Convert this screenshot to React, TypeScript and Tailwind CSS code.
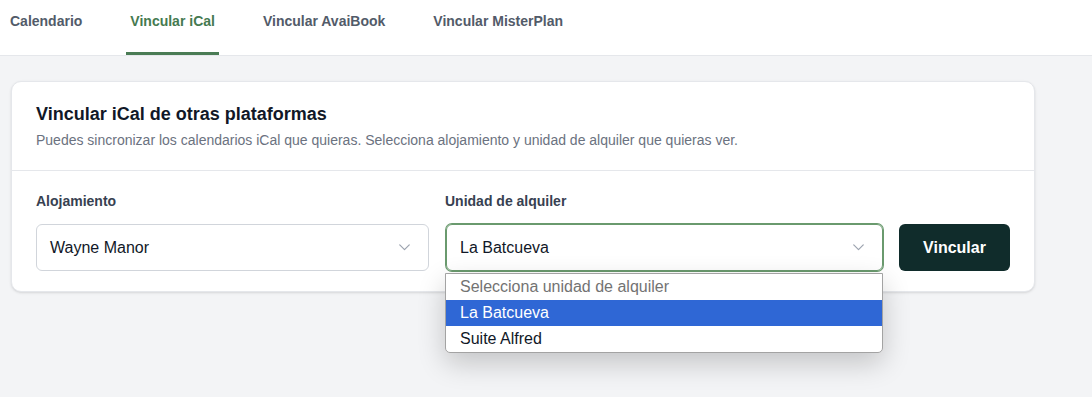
import React from 'react';

const Chevron: React.FC = () => (
  <svg width="11" height="7" viewBox="0 0 11 7" fill="none" className="shrink-0">
    <path d="M0.75 0.9L5.5 5.6L10.25 0.9" stroke="#9ca3af" strokeWidth="1.2" strokeLinecap="round" strokeLinejoin="round" />
  </svg>
);

const App: React.FC = () => {
  const tabs = ['Calendario', 'Vincular iCal', 'Vincular AvaiBook', 'Vincular MisterPlan'];
  const active = 1;
  const options = ['Selecciona unidad de alquiler', 'La Batcueva', 'Suite Alfred'];

  return (
    <div className="min-h-[397px] bg-[#f3f4f6] font-['Liberation_Sans',Arial,sans-serif]">
      {/* Tabs */}
      <div className="bg-white border-b border-[#e5e7eb]">
        <div className="flex gap-10 pl-[6px]">
          {tabs.map((tab, index) => (
            <div
              key={index}
              className={`h-[55px] px-1 pt-[11px] border-b-[3px] text-[14px] leading-5 font-bold
                ${index === active ? 'border-[#4a7c55] text-[#457a50]' : 'border-transparent text-[#525b69]'}`}
            >
              {tab}
            </div>
          ))}
        </div>
      </div>

      {/* Card */}
      <div className="px-[11px] pt-[25px]">
        <div className="w-[1024px] bg-white border border-[#e5e7eb] rounded-[10px] shadow-sm">
          <div className="px-6 pt-5 pb-5 border-b border-[#e5e7eb]">
            <h2 className="text-[18px] leading-6 font-bold text-[#111827]">Vincular iCal de otras plataformas</h2>
            <p className="mt-1 text-[14px] leading-5 text-[#6b7280]">
              Puedes sincronizar los calendarios iCal que quieras. Selecciona alojamiento y unidad de alquiler que quieras ver.
            </p>
          </div>
          <div className="px-6 pt-5 pb-5 flex items-end">
            <div className="w-[393px]">
              <div className="mb-[13px] text-[14px] leading-5 font-bold text-[#374151]">Alojamiento</div>
              <div className="h-[47px] flex items-center justify-between pl-[13px] pr-[18px] border border-[#d1d5db] rounded-md text-[16px] text-[#111827]">
                <span>Wayne Manor</span>
                <Chevron />
              </div>
            </div>
            <div className="w-[437px] ml-[17px]">
              <div className="mb-[13px] -ml-px text-[14px] leading-5 font-bold text-[#374151]">Unidad de alquiler</div>
              <div className="relative">
                <div className="h-[47px] flex items-center justify-between pl-[13px] pr-[18px] border border-[#6a9a6e] ring-1 ring-[#6a9a6e] rounded-md text-[16px] text-[#111827]">
                  <span>La Batcueva</span>
                  <Chevron />
                </div>
                {/* Open listbox */}
                <div className="absolute top-[49px] -left-px right-0 z-10 bg-white border border-[#a3a3a3] rounded-b-[5px] shadow-[0_10px_28px_rgba(0,0,0,0.2)] overflow-hidden">
                  {options.map((opt, index) => (
                    <div
                      key={index}
                      className={`h-[26px] flex items-center pl-[14px] text-[16px]
                        ${index === 1 ? 'bg-[#2f67d5] text-white' : index === 0 ? 'text-[#737373]' : 'text-[#111827]'}`}
                    >
                      {opt}
                    </div>
                  ))}
                </div>
              </div>
            </div>
            <button className="w-[111px] h-[47px] ml-4 rounded-md bg-[#102c2b] text-white text-[16px] font-bold">
              Vincular
            </button>
          </div>
        </div>
      </div>
    </div>
  );
};

export default App;
